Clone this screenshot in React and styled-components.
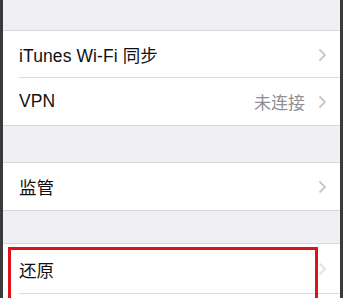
import React from "react";
import styled, { createGlobalStyle } from "styled-components";

const GlobalStyle = createGlobalStyle`
  html, body {
    margin: 0;
    padding: 0;
    background: #3a3a3c;
  }
  body {
    font-family: "Liberation Sans", "Noto Sans CJK SC", sans-serif;
  }
`;

const Frame = styled.div`
  width: 343px;
  height: 298px;
  overflow: hidden;
  display: flex;
  background: #3a3a3c;
  padding: 0 3px 0 3px;
  box-sizing: border-box;
`;

const Screen = styled.div`
  position: relative;
  flex: 1;
  display: flex;
  flex-direction: column;
  background: #efeff4;
`;

const Spacer = styled.div`
  height: ${(p) => p.h}px;
  flex-shrink: 0;
  background: #efeff4;
  border-bottom: 1px solid #d8d8dc;
`;

const Group = styled.div`
  background: #fff;
  display: flex;
  flex-direction: column;
  flex-shrink: 0;
  border-bottom: ${(p) => (p.last ? "none" : "1px solid #d8d8dc")};
`;

const Row = styled.div`
  height: 47px;
  display: flex;
  align-items: center;
  padding-left: 16px;
  position: relative;
  flex-shrink: 0;
  &:not(:last-child)::after {
    content: "";
    position: absolute;
    left: 16px;
    right: 0;
    bottom: 0;
    height: 1px;
    background: #dcdce0;
  }
  &:not(:last-child) {
    height: ${(p) => p.h || 48}px;
  }
`;

const Label = styled.span`
  flex: 1;
  font-size: 17.5px;
  color: #111;
  letter-spacing: 0.1px;
`;

const Detail = styled.span`
  font-size: 17px;
  color: #8e8e93;
  margin-right: 13px;
`;

const ChevronBox = styled.span`
  width: 9px;
  height: 14px;
  margin-right: 13px;
  display: flex;
  opacity: ${(p) => (p.faint ? 0.5 : 1)};
`;

const Highlight = styled.div`
  position: absolute;
  left: 5px;
  top: 247px;
  width: 310px;
  height: 80px;
  border: 3px solid #d9141b;
  box-sizing: border-box;
`;

const Chevron = ({ faint }) => (
  <ChevronBox faint={faint}>
    <svg width="9" height="14" viewBox="0 0 9 14">
      <path d="M1.5 1.5 L7 7 L1.5 12.5" fill="none" stroke="#c7c7cc" strokeWidth="1.8" />
    </svg>
  </ChevronBox>
);

export default function App() {
  return (
    <Frame>
      <GlobalStyle />
      <Screen>
        <Spacer h={30} />
        <Group>
          <Row h={47}>
            <Label>iTunes Wi-Fi 同步</Label>
            <Chevron />
          </Row>
          <Row>
            <Label>VPN</Label>
            <Detail>未连接</Detail>
            <Chevron />
          </Row>
        </Group>
        <Spacer h={36} />
        <Group>
          <Row>
            <Label>监管</Label>
            <Chevron />
          </Row>
        </Group>
        <Spacer h={32} />
        <Group last>
          <Row h={50}>
            <Label>还原</Label>
            <Chevron faint />
          </Row>
          <Row>
            <Label />
          </Row>
        </Group>
        <Highlight />
      </Screen>
    </Frame>
  );
}
